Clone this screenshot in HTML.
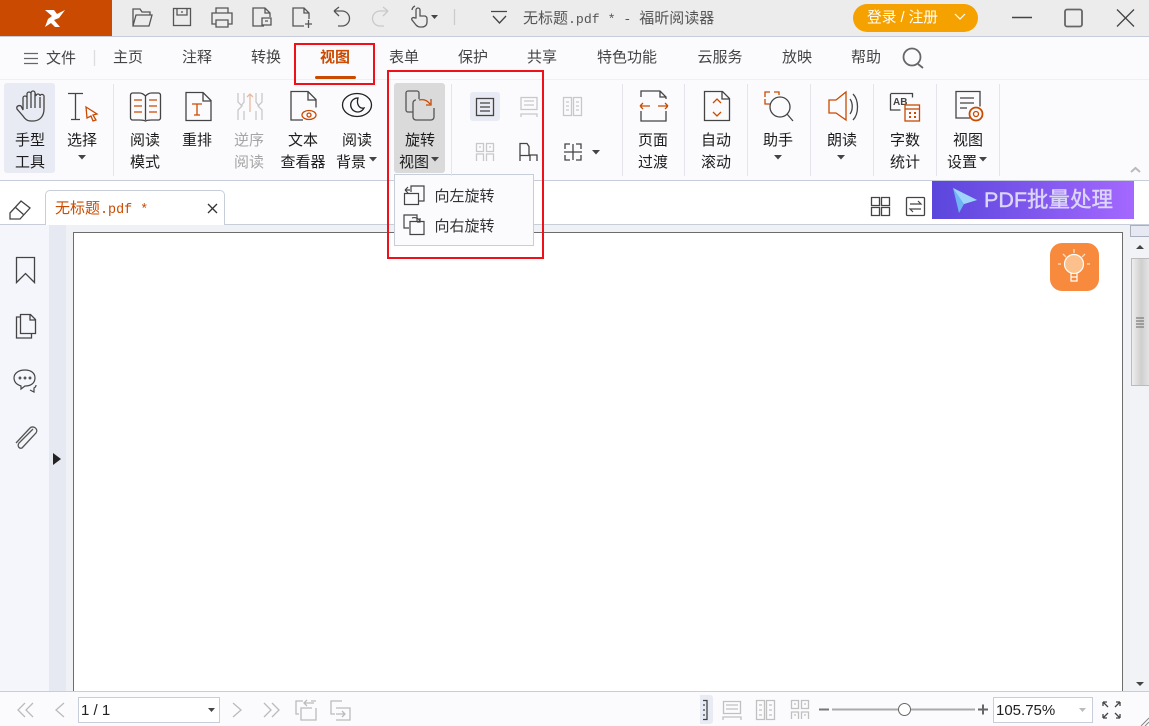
<!DOCTYPE html>
<html lang="zh"><head><meta charset="utf-8"><title>无标题.pdf * - 福昕阅读器</title>
<style>
html,body{margin:0;padding:0;width:1149px;height:726px;overflow:hidden;background:#fff}
body{position:relative;font-family:"Liberation Sans","Noto Sans CJK SC",sans-serif;color:#333}
.b{position:absolute}
.t{position:absolute;width:80px;margin-left:-40px;text-align:center;font-size:15px;line-height:20px;color:#1c1c1c;white-space:nowrap}
.m{color:#444}
.g{color:#a5a5a5}
svg{position:absolute;left:0;top:0}
</style></head><body>
<div class="b" style="left:0;top:0;width:1149px;height:36px;background:#ececec;border-bottom:1px solid #c6ccd9"></div>
<div class="b" style="left:0;top:0;width:112px;height:36px;background:#c94a00"></div>
<div class="b" style="left:0;top:37px;width:1149px;height:143px;background:#fbfbfe;border-bottom:1px solid #c8cdda"></div>
<div class="b" style="left:0;top:79px;width:1149px;height:1px;background:#f0f0f4"></div>
<div class="b" style="left:0;top:224px;width:1149px;height:1px;background:#c8cdda"></div>
<div class="b" style="left:0;top:225px;width:49px;height:466px;background:#f5f6fb"></div>
<div class="b" style="left:49px;top:225px;width:17px;height:466px;background:#e6e9f1"></div>
<div class="b" style="left:66px;top:225px;width:1064px;height:466px;background:#f0f1f5"></div>
<div class="b" style="left:73px;top:232px;width:1048px;height:460px;background:#fff;border:1px solid #6c6c6c;border-bottom:0"></div>
<div class="b" style="left:1130px;top:225px;width:19px;height:466px;background:#f2f3f7"></div>
<div class="b" style="left:1130px;top:225px;width:18px;height:10px;background:#e6e9f1;border:1px solid #a9afbd;border-right:0"></div>
<div class="b" style="left:1131px;top:258px;width:18px;height:128px;background:linear-gradient(90deg,#eeeeee,#cfcfcf 55%,#e4e4e4);border-left:1px solid #bbb;border-top:1px solid #bbb;border-bottom:1px solid #bbb;box-sizing:border-box"></div>
<div class="b" style="left:0;top:691px;width:1149px;height:35px;background:#fbfbfe;border-top:1px solid #c8cdda;box-sizing:border-box"></div>

<!-- ribbon highlights -->
<div class="b" style="left:4px;top:83px;width:51px;height:90px;background:#e8ebf3;border-radius:3px"></div>
<div class="b" style="left:394px;top:83px;width:51px;height:90px;background:#dadada;border-radius:3px"></div>
<div class="b" style="left:470px;top:92px;width:30px;height:29px;background:#e8ebf3;border-radius:3px"></div>

<!-- tab -->
<div class="b" style="left:45px;top:190px;width:180px;height:35px;background:#fff;border:1px solid #c8cdda;border-bottom:0;border-radius:5px 5px 0 0;box-sizing:border-box"></div>
<div class="b" style="left:55px;top:198px;font:13.4px/20px 'Liberation Mono','Noto Sans CJK SC',monospace;color:#c94a00;white-space:nowrap"><span style="font:15px/20px 'Noto Sans CJK SC',sans-serif">无标题</span>.pdf *</div>
<!-- title -->
<div class="b" style="left:523px;top:8px;font:13.2px/20px 'Liberation Mono','Noto Sans CJK SC',monospace;color:#555;white-space:nowrap"><span style="font:15px/20px 'Noto Sans CJK SC',sans-serif">无标题</span>.pdf * - <span style="font:15px/20px 'Noto Sans CJK SC',sans-serif">福昕阅读器</span></div>
<!-- login -->
<div class="b" style="left:867px;top:8px;width:1px;height:1px"></div>
<div class="b" style="left:853px;top:4px;width:125px;height:28px;background:#f5a200;border-radius:14px"></div>
<div class="b" style="left:867px;top:8px;font-size:14.7px;line-height:20px;color:#fff;white-space:nowrap">登录 / 注册</div>

<!-- menu tabs -->
<div class="t m" style="left:61px;top:49px">文件</div>
<div class="t m" style="left:128px;top:48px">主页</div>
<div class="t m" style="left:197px;top:48px">注释</div>
<div class="t m" style="left:266px;top:48px">转换</div>
<div class="t" style="left:335px;top:48px;color:#c94a00;font-weight:bold">视图</div>
<div class="t m" style="left:404px;top:48px">表单</div>
<div class="t m" style="left:473px;top:48px">保护</div>
<div class="t m" style="left:542px;top:48px">共享</div>
<div class="t m" style="left:627px;top:48px">特色功能</div>
<div class="t m" style="left:720px;top:48px">云服务</div>
<div class="t m" style="left:797px;top:48px">放映</div>
<div class="t m" style="left:866px;top:48px">帮助</div>
<div class="b" style="left:315px;top:76px;width:41px;height:3px;background:#c94a00;border-radius:2px"></div>

<!-- ribbon labels -->
<div class="t" style="left:30px;top:131px">手型</div><div class="t" style="left:30px;top:153px">工具</div>
<div class="t" style="left:82px;top:131px">选择</div>
<div class="t" style="left:145px;top:131px">阅读</div><div class="t" style="left:145px;top:153px">模式</div>
<div class="t" style="left:197px;top:131px">重排</div>
<div class="t g" style="left:249px;top:131px">逆序</div><div class="t g" style="left:249px;top:153px">阅读</div>
<div class="t" style="left:303px;top:131px">文本</div><div class="t" style="left:303px;top:153px">查看器</div>
<div class="t" style="left:357px;top:131px">阅读</div><div class="t" style="left:351px;top:153px">背景</div>
<div class="t" style="left:420px;top:131px">旋转</div><div class="t" style="left:414px;top:153px">视图</div>
<div class="t" style="left:653px;top:131px">页面</div><div class="t" style="left:653px;top:153px">过渡</div>
<div class="t" style="left:716px;top:131px">自动</div><div class="t" style="left:716px;top:153px">滚动</div>
<div class="t" style="left:778px;top:131px">助手</div>
<div class="t" style="left:842px;top:131px">朗读</div>
<div class="t" style="left:905px;top:131px">字数</div><div class="t" style="left:905px;top:153px">统计</div>
<div class="t" style="left:968px;top:131px">视图</div><div class="t" style="left:962px;top:153px">设置</div>

<!-- banner -->
<div class="b" style="left:932px;top:181px;width:202px;height:38px;background:linear-gradient(90deg,#5a46dc,#a468ff)"></div>
<div class="b" style="left:984px;top:186px;font-size:21.5px;line-height:28px;color:#dcd6fb;white-space:nowrap;-webkit-text-stroke:.4px #dcd6fb">PDF批量处理</div>

<!-- dropdown -->
<div class="b" style="left:394px;top:174px;width:140px;height:72px;background:#fbfbfe;border:1px solid #c8cdda;box-sizing:border-box"></div>
<div class="t" style="left:464.500px;top:187px;color:#333">向左旋转</div>
<div class="t" style="left:464.500px;top:217px;color:#333">向右旋转</div>

<!-- status -->
<div class="b" style="left:78px;top:697px;width:142px;height:26px;background:#fff;border:1px solid #c8cdda;box-sizing:border-box"></div>
<div class="b" style="left:81px;top:701px;font-size:15px;line-height:20px;color:#222">1 / 1</div>
<div class="b" style="left:685px;top:695px;width:28px;height:29px;background:#e8ebf3;border-radius:3px"></div>
<div class="b" style="left:685px;top:695px;width:15px;height:29px;background:#fbfbfe"></div>
<div class="b" style="left:993px;top:697px;width:100px;height:26px;background:#fff;border:1px solid #c8cdda;box-sizing:border-box"></div>
<div class="b" style="left:996px;top:701px;font-size:15px;line-height:20px;color:#222">105.75%</div>

<svg width="1149" height="726" viewBox="0 0 1149 726" fill="none" stroke="#555" stroke-width="1.300">
<!-- logo -->
<path d="M45 10h9l3 4 8-4-6 8-5 2 6 7h-5l-4-4-6 4 3-8 4-3z" fill="#fff" stroke="none"/>
<!-- title icons -->
<path d="M133 26V9h7l2 3h8v3M133 26l3-11h16l-3 11z"/>
<rect x="173.500" y="8.500" width="17" height="17"/><path d="M177 9v6h10V9M182 11v2"/>
<path d="M216 13V8h12v5M216 24h-4V13h20v11h-4M216 20h12v7h-12z"/>
<path d="M264 26h-11V8h12l5 5v4M265 8v5h5M262 18h9v7h-9zM265 21h3"/>
<path d="M304 26h-11V8h11l5 5v6M304 8v5h5M305 24h7M308.500 20v8"/>
<path d="M334 11l5-4M334 11l5 5M335 11h7a7.500 7.500 0 0 1 0 15h-4"/>
<path stroke="#c9c9c9" d="M388 11l-5-4M388 11l-5 5M387 11h-7a7.500 7.500 0 0 0 0 15h4"/>
<path d="M416 18V10a2 2 0 0 1 4 0v6h5a3 3 0 0 1 2 3v3c0 3-2 5-5 5h-2c-2 0-3-1-4-2l-4-5c-1-2 1-3 3-2zM412 10a5 5 0 0 1 3-4"/>
<path d="M431 15h7l-3.500 4z" fill="#444" stroke="none"/>
<path d="M454.500 9v16" stroke="#ccc"/>
<path d="M491 11.500h16M493 16l6.500 7 6.500-7" stroke="#444"/>
<path d="M955 14l5 5 5-5" stroke="#fff" stroke-width="1.200"/>
<path d="M1012 17.500h20" stroke="#444" stroke-width="1.600"/>
<rect x="1065" y="9.500" width="17" height="17" rx="2" stroke="#666" stroke-width="1.800"/>
<path d="M1117 9.500l17 17M1134 9.500l-17 17" stroke="#444"/>
<!-- tabs deco -->
<path d="M24 53.500h14M24 58.500h14M24 63.500h14" stroke="#666"/>
<path d="M94.500 50v16" stroke="#ddd"/>
<circle cx="912" cy="57" r="8.500" stroke="#666" stroke-width="1.800"/><path d="M918 64l5 4" stroke="#666" stroke-width="1.800"/>
<!-- ribbon separators -->
<path d="M113.500 84v92M451.500 84v92M622.500 84v92M684.500 84v92M747.500 84v92M810.500 84v92M873.500 84v92M936.500 84v92M999.500 84v92" stroke="#e4e4ea" stroke-width="1"/>
<!-- hand -->
<path d="M23 110V98a2 2 0 0 1 4 0v-4a2 2 0 0 1 4 0v-1a2 2 0 0 1 4 0l1 3a2 2 0 0 1 4 0 2 2 0 0 1 4 1v12c0 7-4 12-11 12h-2c-4 0-6-2-8-5l-6-7c-1-3 2-4 4-3z" stroke="#444"/>
<path d="M27 98v11M31 94v14M35 94v14M40 97v11" stroke="#444"/>
<!-- select -->
<path d="M68 93.500h15M75.500 94v25M71 119.500h9" stroke="#444"/>
<path d="M86 107l11 7-4 1 3 5-3 1-2-5-4 2z" stroke="#c94a00"/>
<!-- read mode -->
<path d="M145.500 96c-2-2-4-3-6-3h-7c-1 0-2 1-2 2v23c0 1 1 2 2 2h7c2 0 4 0 6 1 2-1 4-1 6-1h7c1 0 2-1 2-2V95c0-1-1-2-2-2h-7c-2 0-4 1-6 3zv24" stroke="#444"/>
<path d="M134 100h8M134 106h8M134 112h8M149 100h8M149 106h8M149 112h8" stroke="#c94a00"/>
<!-- reflow -->
<path d="M186 92.500h17l8 8v20h-25zM203 93v8h8" stroke="#444"/>
<path d="M192 104h10M197 104v11M194 115h6" stroke="#c94a00"/>
<!-- reverse -->
<g stroke="#c8c8c8"><path d="M238 93v9l4 4-4 4v10M244 93v9l-3 4M262 93v9l-4 4 4 4v10M256 93v9l3 4M244 111v9M256 111v9"/><path d="M250 112V94M247 97l3-3 3 3" stroke="#eab89c"/></g>
<!-- text viewer -->
<path d="M303 120h-12V91.500h17l8 8v8M308 92v8h8" stroke="#444"/>
<ellipse cx="309" cy="115" rx="7" ry="4.500" stroke="#c94a00"/><circle cx="309" cy="115" r="2" stroke="#c94a00"/>
<!-- background -->
<ellipse cx="357" cy="105" rx="14.500" ry="11.500" stroke="#222"/>
<path d="M358 98a7 7 0 1 0 6 10c-4 1-8-3-6-10z" stroke="#222"/>
<!-- carets -->
<g fill="#444" stroke="none">
<path d="M78 155h8l-4 4.500zM369 157h8l-4 4.500zM431 157h8l-4 4.500zM592 150h8l-4 4.500zM774 155h8l-4 4.500zM837 155h8l-4 4.500zM979 157h8l-4 4.500zM208 708h7l-3.500 4z"/>
<path d="M1079 708h7l-3.500 4z" fill="#bbb"/>
</g>
<!-- rotate view -->
<path d="M413 112h-5a2 2 0 0 1-2-2V93a2 2 0 0 1 2-2h9a2 2 0 0 1 2 2v6" stroke="#555"/>
<path d="M416 100a3 3 0 0 0-3 3v14a3 3 0 0 0 3 3h15a3 3 0 0 0 3-3v-9" stroke="#555"/>
<path d="M419 100c4-1 8 0 11 4M431 99v6h-5" stroke="#c94a00"/>
<!-- view grid -->
<rect x="476.500" y="98.500" width="17" height="17" stroke="#444"/><path d="M480 103h10M480 107h10M480 111h10" stroke="#444"/>
<g stroke="#c8c8c8"><path d="M521 97.500h16v12h-16zM524 101h10M524 105h10M521 117v-3h16v3"/>
<path d="M563.500 97.500h8v18h-8zM573.500 97.500h8v18h-8zM566 102h3M566 106h3M566 110h3M576 102h3M576 106h3M576 110h3"/>
<path d="M476.500 143.500h7v8h-7zM486.500 143.500h7v8h-7zM476.500 161v-7h7v7M486.500 161v-7h7v7M479 147h2M489 147h2"/></g>
<path d="M520 143.500h7l2 3v9h-9zM520 161v-3M530 161v-6h7v6M520 144v17" stroke="#444"/>
<path d="M570 144h-5v5M576 144h5v5M570 160h-5v-5M576 160h5v-5M564 152h18M573 144v16" stroke="#444"/>
<!-- page transition -->
<path d="M641 97v-6h19l6 6v2M641 111v10h25v-10M660 91v6h6" stroke="#444"/>
<path d="M640 106h10M640 106l3-3M640 106l3 3M658 106h10M668 106l-3-3M668 106l-3 3" stroke="#c94a00"/>
<!-- auto scroll -->
<path d="M704.500 91.500h18l7 7v22h-25zM722 92v7h7" stroke="#444"/>
<path d="M713 103l4-4 4 4M713 112l4 4 4-4" stroke="#c94a00"/>
<!-- helper -->
<path d="M770 92h-5v5M774 92h5v3M770 104h-5v-5" stroke="#c94a00"/>
<circle cx="780" cy="107" r="10" stroke="#444"/><path d="M787 114l6 7" stroke="#444"/>
<!-- speaker -->
<path d="M829 100h7l10-8v28l-10-7h-7z" stroke="#c94a00"/>
<path d="M850 99c3 4 3 11 0 15M853 94c6 6 6 20 0 26" stroke="#444"/>
<!-- word count -->
<path d="M890.500 93.500h22v4M890.500 94v16h10" stroke="#444"/>
<text x="893" y="105" font-family="Liberation Sans" font-size="10" font-weight="bold" fill="#444" stroke="none">AB</text>
<rect x="905" y="105" width="14.500" height="16" stroke="#c94a00"/><path d="M905 109h14" stroke="#c94a00"/>
<path d="M909 112h2v2h-2zM914 112h2v2h-2zM909 116h2v2h-2zM914 116h2v2h-2z" fill="#c94a00" stroke="none"/>
<!-- settings -->
<path d="M970 118h-14V91.500h24v15M960 98h14M960 103h14M960 108h7" stroke="#444"/>
<circle cx="976" cy="114" r="6.500" stroke="#c94a00" stroke-width="1.800"/><circle cx="976" cy="114" r="2.500" stroke="#c94a00"/>
<!-- collapse -->
<path d="M1131 172l4.500-4 4.500 4" stroke="#bbb" stroke-width="2"/>
<!-- eraser -->
<path d="M10 213l11-12 9 7-10 11h-10zM15 207l9 8" stroke="#444"/>
<!-- tab close -->
<path d="M208 204l9 9M217 204l-9 9" stroke="#333"/>
<!-- grid / swap -->
<path d="M871.500 197.500h8v8h-8zM881.500 197.500h8v8h-8zM871.500 207.500h8v8h-8zM881.500 207.500h8v8h-8z" stroke="#444"/>
<rect x="906.500" y="197.500" width="18" height="18" rx="1" stroke="#444"/><path d="M910 204h11l-3-3M921 209h-11l3 3" stroke="#444" stroke-width="1.200"/>
<!-- plane -->
<path d="M953 188l24 12-13 4-5 9z" fill="#6fb4f4" stroke="none"/><path d="M953 188l24 12-13 4z" fill="#9fd4fb" stroke="none"/>
<!-- menu icons -->
<path d="M411 192v-6h13v15h-5M404.500 193.500h14v11h-14zM405 190l3-3M405 190l3 3M405 190h5" stroke="#444" stroke-width="1.200"/>
<path d="M417 221v-6h-13v13h5M410 221.500h14v13h-14zM412 218c3-1 6 0 8 3M420 218v4h-3" stroke="#444" stroke-width="1.200"/>
<!-- red boxes -->
<rect x="295" y="44" width="79" height="40" stroke="#f0101a" stroke-width="2"/>
<rect x="388" y="71" width="155" height="187" stroke="#f0101a" stroke-width="2"/>
<!-- left panel -->
<path d="M16.500 257.500h18v25l-9-9-9 9z" stroke="#444"/>
<path d="M20 317h-3.500v21h15v-4M20.500 314.500h10l5 5v14h-15zM30 315v5h5" stroke="#444"/>
<path d="M25 370c-6 0-11 3-11 8s4 7 7 8v3l4-3c6 0 10-3 10-8s-4-8-10-8zM30 390l4 2v-4c2-1 2-2 2-3" stroke="#444" stroke-width="1.200"/>
<circle cx="20" cy="378" r=".8" fill="#444"/><circle cx="25" cy="378" r=".8" fill="#444"/><circle cx="30" cy="378" r=".8" fill="#444"/>
<path d="M33 430l-14 14c-2 3 0 6 3 5l14-15c3-4-3-8-6-5l-14 15" stroke="#555" stroke-width="1.300" transform="translate(0 -1)"/>
<path d="M53 453l8 6-8 6z" fill="#222" stroke="none"/>
<!-- bulb -->
<rect x="1050" y="243" width="49" height="48" rx="12" fill="#f78a3d" stroke="none"/>
<circle cx="1074" cy="264" r="9.500" fill="#fcc08c" stroke="#fff" stroke-width="1.200"/>
<path d="M1071 273v8h6v-8M1071 277h6" stroke="#fff" stroke-width="1.200"/>
<path d="M1074 249v4M1063 254l3 3M1085 254l-3 3M1058 264h3M1087 264h3" stroke="#fde0c8" stroke-width="1.300"/>
<!-- scrollbar -->
<path d="M1136 249l4-4 4 4z M1136 682h8l-4 4z" fill="#444" stroke="none"/>
<path d="M1136 318h8M1136 321h8M1136 324h8M1136 327h8" stroke="#666" stroke-width="1"/>
<!-- status nav -->
<g stroke="#bbb"><path d="M25 703l-7 7 7 7M33 703l-7 7 7 7M64 703l-8 7 8 7M233 703l8 7-8 7M264 703l7 7-7 7M272 703l7 7-7 7"/>
<path d="M303 701h-7v13h3M311 701h5v0M312 708h-11v12h15v-12M304 703h10M307 700l-3 3 3 3"/>
<path d="M342 701h-11v13h4M336 708h14v12h-14M336 714h9M342 711l3 3-3 3"/></g>
<path d="M703 700.500h4v19h-4M703 705h2M703 710h2M703 715h2" stroke="#444"/>
<g stroke="#c0c0c0"><path d="M723.500 701.500h17v12h-17zM726 705h12M726 709h12M723 720v-3h18v3"/>
<path d="M756.500 700.500h8v19h-8zM766.500 700.500h8v19h-8zM759 705h3M759 710h3M759 715h3M769 705h3M769 710h3M769 715h3"/>
<path d="M791.500 700.500h7v8h-7zM801.500 700.500h7v8h-7zM791.500 719v-7h7v7M801.500 719v-7h7v7M794 704h2M804 704h2M794 715h2M804 715h2"/></g>
<path d="M819 709.500h10" stroke="#777" stroke-width="2"/>
<path d="M832 709.500h143" stroke="#aaa" stroke-width="2"/>
<circle cx="904.500" cy="709.500" r="6" fill="#fff" stroke="#666" stroke-width="1"/>
<path d="M978 709.500h10M983 704.500v10" stroke="#666" stroke-width="2"/>
<path d="M1103 702l5 5M1103 702h4M1103 702v4M1120 702l-5 5M1120 702h-4M1120 702v4M1103 718l5-5M1103 718h4M1103 718v-4M1120 718l-5-5M1120 718h-4M1120 718v-4" stroke="#444"/>
<path d="M1141 726l8-8M1145 726l4-4" stroke="#888" stroke-width="1"/>
</svg>
</body></html>
